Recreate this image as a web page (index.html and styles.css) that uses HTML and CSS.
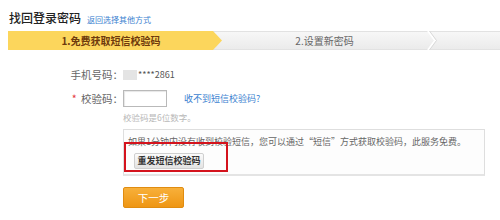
FILE: index.html
```html
<!DOCTYPE html>
<html lang="zh-CN">
<head>
<meta charset="utf-8">
<title>找回登录密码</title>
<link rel="stylesheet" href="styles.css">
</head>
<body>
<div class="page">
  <div class="head">
    <h1 class="title">找回登录密码</h1>
    <a class="back" href="#">返回选择其他方式</a>
  </div>
  <div class="steps">
    <div class="step step-on">1.免费获取短信校验码</div>
    <div class="step step-off">2.设置新密码</div>
    <svg class="chev" width="10" height="19" viewBox="0 0 10 19"><polyline points="1,0 8,9.5 1,19" fill="none" stroke="#ffffff" stroke-width="2"/><polyline points="2.5,0 9.5,9.5 2.5,19" fill="none" stroke="#d8d8d8" stroke-width="1"/></svg>
    <div class="step-rest"></div>
  </div>
  <div class="form">
    <div class="row">
      <span class="label">手机号码：</span>
      <span class="value"><span class="blur"></span>****2861</span>
    </div>
    <div class="row row-code">
      <span class="label"><span class="star">*</span> 校验码：</span>
      <span class="value"><span class="input"></span><a class="nosms" href="#">收不到短信校验码?</a></span>
    </div>
    <div class="row row-hint">
      <span class="label"></span>
      <span class="hint">校验码是6位数字。</span>
    </div>
    <div class="row">
      <span class="label"></span>
      <div class="tipbox">
        <p class="tip">如果1分钟内没有收到校验短信，您可以通过“短信”方式获取校验码，此服务免费。</p>
        <button class="resend" type="button">重发短信校验码</button>
        <span class="mark"></span>
      </div>
    </div>
    <div class="row row-next">
      <span class="label"></span>
      <button class="next" type="button">下一步</button>
    </div>
  </div>
</div>
</body>
</html>
```
FILE: styles.css
```css
html, body {
  margin: 0;
  padding: 0;
  background: #ffffff;
}
body {
  width: 500px;
  height: 220px;
  overflow: hidden;
  font-family: "Noto Sans CJK SC", "Noto Sans", sans-serif;
  color: #333;
}
.page {
  padding-top: 10px;
}
.head {
  display: flex;
  align-items: baseline;
  padding-left: 9px;
  height: 16px;
}
.title {
  margin: 0;
  font-size: 12px;
  font-weight: 500;
  color: #222;
  line-height: 16px;
}
.back {
  margin-left: 6px;
  font-size: 8px;
  color: #3b7fd0;
  text-decoration: none;
}
.steps {
  margin-top: 5px;
  margin-left: 8px;
  height: 19px;
  display: flex;
  background: linear-gradient(#f7f7f7, #ebebeb);
  border-top: 1px solid #e2e2e2;
  border-bottom: 1px solid #e2e2e2;
  box-sizing: border-box;
}
.step {
  height: 17px;
  line-height: 17px;
  font-size: 10px;
  text-align: center;
}
.step-on {
  width: 206px;
  padding-right: 8px;
  margin-top: -1px;
  height: 19px;
  line-height: 19px;
  background: #fcd65c;
  color: #6e3a0c;
  font-weight: 700;
  clip-path: polygon(0 0, 205px 0, 100% 50%, 205px 100%, 0 100%);
}
.step-off {
  width: 205px;
  color: #666;
}
.chev {
  margin-top: -1px;
  flex: none;
}
.step-rest {
  flex: 1;
}
.form {
  margin-top: 18px;
  display: flex;
  flex-direction: column;
}
.row {
  display: flex;
  align-items: center;
}
.label {
  width: 123px;
  flex: none;
  text-align: right;
  font-size: 10.5px;
  color: #666;
  line-height: 14px;
}
.value {
  display: flex;
  align-items: center;
  font-size: 9px;
  color: #555;
  line-height: 14px;
}
.blur {
  display: inline-block;
  width: 14px;
  height: 10px;
  background: #e4e4e4;
  margin-right: 1px;
}
.row-code {
  margin-top: 8px;
}
.star {
  color: #e4393c;
  margin-right: 2px;
}
.input {
  display: inline-block;
  width: 42px;
  height: 15px;
  border: 1px solid #b9b9b9;
  box-shadow: inset 1px 1px 1px #e6e6e6;
  background: #fff;
}
.nosms {
  margin-left: 17px;
  font-size: 9px;
  color: #3b7fd0;
  text-decoration: none;
}
.row-hint {
  margin-top: 4px;
}
.hint {
  font-size: 8.5px;
  color: #b8b8b8;
  line-height: 12px;
}
.row-hint .label {
  line-height: 12px;
}
.row-hint + .row {
  margin-top: 6px;
}
.tipbox {
  position: relative;
  width: 362px;
  height: 47px;
  box-sizing: border-box;
  border: 1px solid #dedede;
  border-bottom: 2px solid #e4e4e4;
  background: #fdfdfd;
  padding: 6px 0 0 4px;
}
.tip {
  margin: 0;
  font-size: 9px;
  line-height: 11px;
  color: #666;
  white-space: nowrap;
}
.resend {
  display: block;
  margin: 6px 0 0 6px;
  width: 70px;
  height: 16px;
  padding: 0;
  border: 1px solid #cfcfcf;
  border-radius: 2px;
  background: linear-gradient(#fbfbfb, #e3e3e3);
  font-family: inherit;
  font-size: 9px;
  font-weight: 700;
  color: #333;
  line-height: 14px;
}
.mark {
  position: absolute;
  left: 0;
  top: 12px;
  width: 104px;
  height: 30px;
  box-sizing: border-box;
  border: 2px solid #d4131d;
}
.row-next {
  margin-top: 11px;
}
.next {
  width: 61px;
  height: 21px;
  padding: 0;
  border: 1px solid #e08c10;
  border-radius: 2px;
  background: linear-gradient(#f8b03a, #ee9614);
  color: #fff;
  font-family: inherit;
  font-size: 10.5px;
  line-height: 19px;
}
```
